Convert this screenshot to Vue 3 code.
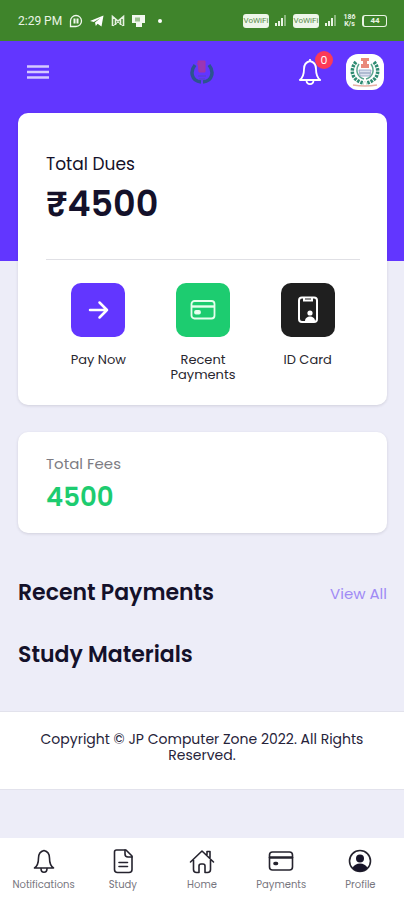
<script setup>
const actions = [
  { id: 'pay', label: 'Pay Now', tone: 'violet' },
  { id: 'recent', label: 'Recent Payments', tone: 'green' },
  { id: 'idcard', label: 'ID Card', tone: 'black' },
]
const tabs = [
  { id: 'bell', label: 'Notifications' },
  { id: 'study', label: 'Study' },
  { id: 'home', label: 'Home' },
  { id: 'card', label: 'Payments' },
  { id: 'profile', label: 'Profile' },
]
</script>

<template>
  <div class="page">
    <div class="status">
      <div class="status-left">
        <span>2:29 PM</span>
        <svg width="14" height="14" viewBox="0 0 14 14" fill="none" stroke="#f2f8ef" stroke-width="1.3"><path d="M1.500 12.500V7A5.500 5.500 0 1 1 7 12.500z" /><path d="M5.500 4.500v5M8.500 4.500v5" stroke-width="2" /></svg>
        <svg width="14" height="14" viewBox="0 0 14 14" fill="#fff"><path d="M0 7 13.5 1.5 11.5 12.5 7.6 9.8 5.8 12 5 8.6 10.5 4 3.8 8z" /></svg>
        <svg width="14" height="14" viewBox="0 0 14 14" fill="none" stroke="#e6f1e1"><path d="M1.500 12V2.500l5.500 4.500 5.500-4.500V12M4.500 5v6M9.500 5v6" stroke-width="1.600" /><path d="M2 12 7 8l5 4" /></svg>
        <svg width="14" height="14" viewBox="0 0 14 14"><path d="M0 1h13v8H0z" fill="#f2f8ef" /><path d="M3 3.500h5v4H3z" fill="#9cc08f" /><path d="M4 8h6v5H4z" fill="#f2f8ef" /></svg>
        <i class="dot"></i>
      </div>
      <div class="status-right">
        <span class="vowifi">VoWiFi</span>
        <svg width="12" height="11" viewBox="0 0 12 11" fill="#e9f4e4"><path d="M0 8h2v3H0zM3 6h2v5H3zM6 3h2v8H6z" /><path d="M9 0h2v11H9z" opacity=".45" /></svg>
        <span class="vowifi">VoWiFi</span>
        <svg width="12" height="11" viewBox="0 0 12 11" fill="#e9f4e4"><path d="M0 8h2v3H0zM3 6h2v5H3zM6 3h2v8H6z" /><path d="M9 0h2v11H9z" opacity=".45" /></svg>
        <span class="speed">186<br />K/s</span>
        <span class="battery">44</span>
      </div>
    </div>

    <header class="hero">
      <div class="bar">
        <button class="plain menu" aria-label="Menu">
          <svg width="24" height="18" viewBox="0 0 24 18" stroke="#d5c9ff" stroke-width="2.4"><path d="M1 3.500h22M1 9h22M1 14.500h22" /></svg>
        </button>
        <svg class="brand" width="24" height="26" viewBox="0 0 24 26" fill="none"><path d="M5 6C0 12 1 22 11 23M19 6c5 6 4 16-6 17" stroke="#2c548f" stroke-width="3.500" /><path d="M8 2h7v11H9zM7 4l3 5" fill="#9b36b4" stroke="#a532a8" /><path d="M8 17h8M9 20h6" stroke="#5544c0" /></svg>
        <div class="tools">
          <button class="plain bell" aria-label="Notifications">
            <svg width="24" height="28" viewBox="0 0 24 28" fill="none" stroke="#fff" stroke-width="1.8" stroke-linejoin="round"><path d="M12 3C7.8 4 6 7.5 6 11c0 5-1 8.5-4.2 11h20.4C19 19.500 18 16 18 11c0-3.500-1.800-7-6-8zM12 1v2M8.500 22.500c.2 4.800 6.800 4.800 7 0" /></svg>
            <span class="badge">0</span>
          </button>
          <button class="plain avatar" aria-label="Account">
            <svg width="32" height="32" viewBox="0 0 32 32" fill="none"><path d="M7 6C0 14 3 25 15 27M25 6c7 8 4 19-8 21" stroke="#2d8b72" stroke-width="3.500" stroke-dasharray="2.500 1" /><path d="M10 8C6 14 8 21 15 23M22 8c4 6 2 13-5 15" stroke="#5aa68e" stroke-width="1.500" /><path d="M12 2h8v3h-2v3h2v4h-8V8h2V5h-2z" fill="#e9897b" /><path d="M10 14h12l-1 6H11z" fill="#dce2ef" stroke="#8e9dc0" stroke-width=".8" /><path d="M11 17h10" stroke="#8493b5" /><path d="M4 29q12 2 24 0" stroke="#e5b0a6" stroke-width="1.500" /></svg>
          </button>
        </div>
      </div>
    </header>

    <main>
      <section class="card dues">
        <p class="dues-label">Total Dues</p>
        <p class="dues-sum">₹4500</p>
        <div class="actions">
          <button v-for="a in actions" :key="a.id" class="action">
            <span class="tile" :class="a.tone">
              <svg v-if="a.id === 'pay'" width="24" height="24" viewBox="0 0 24 24" fill="none" stroke="#fff" stroke-width="2.500" stroke-linecap="round" stroke-linejoin="round"><path d="M4 12h17M13.500 4.500 21 12l-7.500 7.500" /></svg>
              <svg v-else-if="a.id === 'recent'" width="26" height="22" viewBox="0 0 26 22" fill="none" stroke="#e4ffed" stroke-width="1.800"><rect x="1.500" y="2" width="23" height="17.500" rx="3" /><path d="M2 7.500h22" stroke-width="2.400" /><rect x="5" y="12" width="5" height="2.500" rx="1" fill="#fff" /></svg>
              <svg v-else width="22" height="28" viewBox="0 0 22 28" fill="none" stroke="#fff" stroke-width="2"><rect x="2" y="1.500" width="18" height="24.500" rx="3" /><path d="M7 2v2.500h8V2" /><circle cx="13" cy="17" r="2.600" fill="#fff" stroke="none" /><path d="M8 25c0-6 10-6 10 0z" fill="#fff" stroke="none" /></svg>
            </span>
            <span class="action-label">{{ a.label }}</span>
          </button>
        </div>
      </section>

      <section class="card fees">
        <p class="fees-label">Total Fees</p>
        <p class="fees-sum">4500</p>
      </section>

      <div class="heading">
        <h2>Recent Payments</h2>
        <a href="#payments">View All</a>
      </div>
      <div class="heading">
        <h2>Study Materials</h2>
      </div>
    </main>

    <footer>Copyright © JP Computer Zone 2022. All Rights Reserved.</footer>

    <nav class="tabs">
      <a v-for="t in tabs" :key="t.id" :href="'#' + t.id">
        <svg width="26" height="26" viewBox="0 0 26 26" fill="none" stroke="#25232e" stroke-width="1.600" stroke-linejoin="round" stroke-linecap="round">
          <template v-if="t.id === 'bell'"><path d="M13 2.500C9 3.500 7.500 6.500 7.500 10c0 5-1 8-4 10h19c-3-2-4-5-4-10 0-3.500-1.500-6.500-5.500-7.500z" /><path d="M10 20.500c0 5 6 5 6 0" /></template>
          <template v-else-if="t.id === 'study'"><path d="M6.500 2H16l6 6v13.500a3 3 0 0 1-3 3H7.500a3 3 0 0 1-3-3V4a2 2 0 0 1 2-2z" /><path d="M15 2v4a3 3 0 0 0 3 3h4M9 14.500h8.500M9 18.500h8.500" /></template>
          <template v-else-if="t.id === 'home'"><path d="M1.500 14 13 3l11.500 11M18 6.500V3.500h3v6M4.500 12v9.500a3 3 0 0 0 3 3H10V18a2 2 0 0 1 2-2h2a2 2 0 0 1 2 2v6.500h2.500a3 3 0 0 0 3-3V12" /></template>
          <template v-else-if="t.id === 'card'"><rect x="1.500" y="4" width="23" height="18" rx="3" /><path d="M2 9.500h22" stroke-width="2.600" /><rect x="6" y="14.500" width="3.500" height="2" rx="1" fill="#25232e" /></template>
          <template v-else><circle cx="13" cy="13" r="10.500" /><circle cx="13" cy="10.500" r="4" fill="#171428" stroke="none" /><path d="M5.500 20c2.500-6 12.500-6 15 0-3.500 4.500-11.500 4.500-15 0z" fill="#171428" stroke="none" /></template>
        </svg>
        <span>{{ t.label }}</span>
      </a>
    </nav>
  </div>
</template>

<style>
body {
  background: #ededf8;
}
</style>

<style scoped>
.page {
  box-sizing: border-box;
  min-height: 100vh;
  display: flex;
  flex-direction: column;
  font-family: Poppins, Inter, "Noto Sans", sans-serif;
  color: #14112a;
}
p,
h2 {
  margin: 0;
}
.status {
  display: flex;
  align-items: center;
  justify-content: space-between;
  height: 41px;
  padding: 0 17px 0 18px;
  background: #3f842b;
  color: #e9f4e4;
  font: 12px/16px Roboto, sans-serif;
}
.status-left {
  display: flex;
  align-items: center;
  gap: 7px;
}
.dot {
  width: 4px;
  height: 4px;
  margin-left: 5px;
  border-radius: 50%;
  background: #fff;
}
.status-right {
  display: flex;
  align-items: center;
  gap: 6px;
}
.vowifi {
  width: 26px;
  border-radius: 3px;
  background: #eef6ea;
  color: #5a8c4b;
  font-size: 8px;
  line-height: 14px;
  text-align: center;
}
.speed {
  width: 13px;
  font-size: 7px;
  font-weight: 700;
  line-height: 7px;
  text-align: center;
}
.battery {
  width: 22px;
  border: 1px solid #e9f4e4;
  border-left-width: 2px;
  border-radius: 3px;
  font-size: 8px;
  font-weight: 700;
  line-height: 10px;
  text-align: center;
}
.hero {
  box-sizing: border-box;
  height: 220px;
  padding: 13px 20px;
  background: #6236ff;
}
.plain {
  display: block;
  padding: 0;
  border: 0;
  background: none;
  font-family: inherit;
}
.plain svg {
  display: block;
}
.bar {
  display: grid;
  grid-template-columns: 1fr auto 1fr;
  align-items: center;
}
.menu {
  justify-self: start;
  margin-left: 6px;
}
.tools {
  display: flex;
  align-items: center;
  justify-content: flex-end;
  gap: 24px;
}
.bell {
  position: relative;
}
.badge {
  position: absolute;
  top: -7px;
  left: 17px;
  width: 18px;
  height: 18px;
  border-radius: 50%;
  background: #fb3a58;
  color: #fff;
  font-size: 11px;
  line-height: 18px;
}
.avatar {
  display: flex;
  align-items: center;
  justify-content: center;
  width: 38px;
  height: 36px;
  border-radius: 12px;
  background: #fff;
}
main {
  margin-top: -148px;
  padding: 0 17px 0 18px;
}
.card {
  border-radius: 10px;
  background: #fff;
  box-shadow: 0 1px 3px rgba(40, 35, 60, 0.14);
}
.dues {
  padding: 38px 27px 23px 28px;
}
.dues-label {
  font-size: 17px;
  line-height: 26px;
}
.dues-sum {
  padding-bottom: 28px;
  border-bottom: 1px solid #e0e0e5;
  font-size: 35px;
  font-weight: 600;
  line-height: 54px;
}
.actions {
  display: grid;
  grid-template-columns: repeat(3, 1fr);
  padding-top: 23px;
}
.action {
  display: flex;
  flex-direction: column;
  align-items: center;
  gap: 15px;
  padding: 0 8px;
  border: 0;
  background: none;
  color: #29272f;
  font-family: inherit;
  font-size: 13px;
  line-height: 15px;
}
.tile {
  display: flex;
  align-items: center;
  justify-content: center;
  width: 54px;
  height: 54px;
  border-radius: 10px;
}
.violet {
  background: #6236ff;
}
.green {
  background: #1dcc70;
}
.black {
  background: #1f1f1f;
}
.fees {
  margin-top: 27px;
  padding: 20px 28px 15px;
}
.fees-label {
  color: #7d7c83;
  font-size: 15px;
  line-height: 24px;
}
.fees-sum {
  color: #1dcc70;
  font-size: 26px;
  font-weight: 600;
  line-height: 42px;
}
.heading {
  display: flex;
  align-items: center;
  justify-content: space-between;
  margin-top: 30px;
}
.fees + .heading {
  margin-top: 44px;
}
h2 {
  font-size: 22px;
  font-weight: 600;
  line-height: 32px;
}
.heading a {
  color: #a08bf5;
  font-size: 15px;
  text-decoration: none;
}
footer {
  margin: 40px 0 110px;
  padding: 19px 36px 26px;
  border-top: 1px solid #e2e2ec;
  border-bottom: 1px solid #e2e2ec;
  background: #fff;
  color: #26233a;
  font-size: 14px;
  line-height: 16px;
  text-align: center;
}
.tabs {
  position: fixed;
  right: 0;
  bottom: 0;
  left: 0;
  box-sizing: border-box;
  display: grid;
  grid-template-columns: repeat(5, 1fr);
  height: 62px;
  padding: 10px 4px 0;
  background: #fff;
}
.tabs a {
  display: flex;
  flex-direction: column;
  align-items: center;
  gap: 4px;
  color: #77767e;
  font-size: 10px;
  line-height: 14px;
  text-decoration: none;
}
</style>
